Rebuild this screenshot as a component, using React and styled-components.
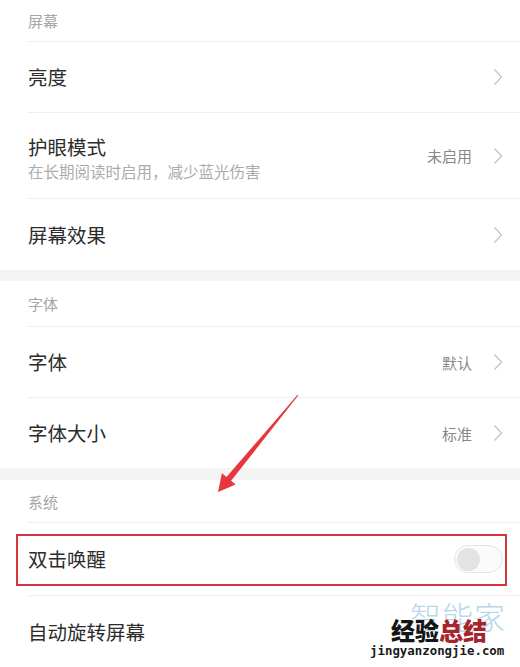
import React from 'react'
import styled, { createGlobalStyle } from 'styled-components'

const Global = createGlobalStyle`
  body {
    margin: 0;
    background: #fff;
    font-family: 'Noto Sans CJK SC', 'Noto Sans', sans-serif;
  }
`

const Page = styled.div`
  position: relative;
  width: 520px;
  height: 667px;
  overflow: hidden;
  background: #fff;
`

const Header = styled.div`
  height: ${p => p.h}px;
  margin-left: 28px;
  display: flex;
  align-items: center;
  font-size: 15px;
  color: #a6a6a6;
  border-bottom: 1px solid #efefef;
`

const Band = styled.div`
  height: ${p => p.h}px;
  background: #f4f4f4;
`

const Row = styled.div`
  position: relative;
  height: ${p => p.h}px;
  margin-left: 28px;
  padding-right: 17px;
  display: flex;
  align-items: center;
  border-bottom: ${p => (p.last ? 'none' : '1px solid #efefef')};
`

const Texts = styled.div`
  flex: 1;
  display: flex;
  flex-direction: column;
`

const Title = styled.div`
  font-size: 19.5px;
  line-height: 30px;
  color: #2c2c2c;
`

const Sub = styled.div`
  font-size: 15.5px;
  line-height: 18px;
  color: #ababab;
`

const Value = styled.span`
  font-size: 15px;
  color: #888;
  margin-right: 21px;
`

const Chevron = () => (
  <svg width="10" height="18" viewBox="0 0 10 18">
    <polyline points="1.5,1.5 8.5,9 1.5,16.5" fill="none" stroke="#c6c6c6" strokeWidth="1.4" />
  </svg>
)

const Track = styled.div`
  width: 49px;
  height: 28px;
  box-sizing: border-box;
  border-radius: 14px;
  border: 1px solid #e4e4e4;
  background: #fbfbfb;
  display: flex;
  align-items: center;
  padding-left: 2px;
`

const Knob = styled.div`
  width: 23px;
  height: 23px;
  border-radius: 50%;
  background: #e3e3e3;
`

const Highlight = styled.div`
  position: absolute;
  left: -12px;
  right: 13px;
  top: 11px;
  height: 52px;
  box-sizing: border-box;
  border: 2px solid #d7343c;
  pointer-events: none;
`

const Arrow = styled.svg`
  position: absolute;
  left: 200px;
  top: 380px;
  width: 110px;
  height: 120px;
`

const Watermark = styled.div`
  position: absolute;
  left: 366px;
  top: 598px;
  width: 150px;
  height: 66px;
`

const Faded = styled.div`
  position: absolute;
  left: 44px;
  top: 2px;
  font-size: 31px;
  line-height: 32px;
  font-weight: 300;
  letter-spacing: 1px;
  color: #b7d8e6;
`

const Brand = styled.div`
  position: absolute;
  left: 25px;
  top: 20px;
  font-size: 24px;
  line-height: 24px;
  font-weight: 900;
  color: #151515;
  span { color: #a5252c; }
`

const Domain = styled.div`
  position: absolute;
  left: 4px;
  top: 44px;
  font-family: 'DejaVu Sans Mono', monospace;
  font-size: 12.4px;
  font-weight: 700;
  line-height: 18px;
  color: #1a1a1a;
`

export default function App() {
  return (
    <Page>
      <Global />
      <Header h={41}>屏幕</Header>
      <Row h={70}>
        <Texts><Title>亮度</Title></Texts>
        <Chevron />
      </Row>
      <Row h={85}>
        <Texts>
          <Title>护眼模式</Title>
          <Sub>在长期阅读时启用，减少蓝光伤害</Sub>
        </Texts>
        <Value>未启用</Value>
        <Chevron />
      </Row>
      <Row h={71} last>
        <Texts><Title>屏幕效果</Title></Texts>
        <Chevron />
      </Row>
      <Band h={11} />
      <Header h={45}>字体</Header>
      <Row h={70}>
        <Texts><Title>字体</Title></Texts>
        <Value>默认</Value>
        <Chevron />
      </Row>
      <Row h={70} last>
        <Texts><Title>字体大小</Title></Texts>
        <Value>标准</Value>
        <Chevron />
      </Row>
      <Band h={12} />
      <Header h={42}>系统</Header>
      <Row h={72}>
        <Texts><Title>双击唤醒</Title></Texts>
        <Track><Knob /></Track>
        <Highlight />
      </Row>
      <Row h={71} last>
        <Texts><Title>自动旋转屏幕</Title></Texts>
      </Row>

      <Arrow viewBox="200 380 110 120">
        <polygon
          points="298.4,395.3 231.1,480.8 235.7,484.6 218,492 221.9,473.2 226.5,477 297.6,394.7"
          fill="#e5373c"
        />
      </Arrow>

      <Watermark>
        <Faded>智能家</Faded>
        <Brand>经验<span>总结</span></Brand>
        <Domain>jingyanzongjie.com</Domain>
      </Watermark>
    </Page>
  )
}
